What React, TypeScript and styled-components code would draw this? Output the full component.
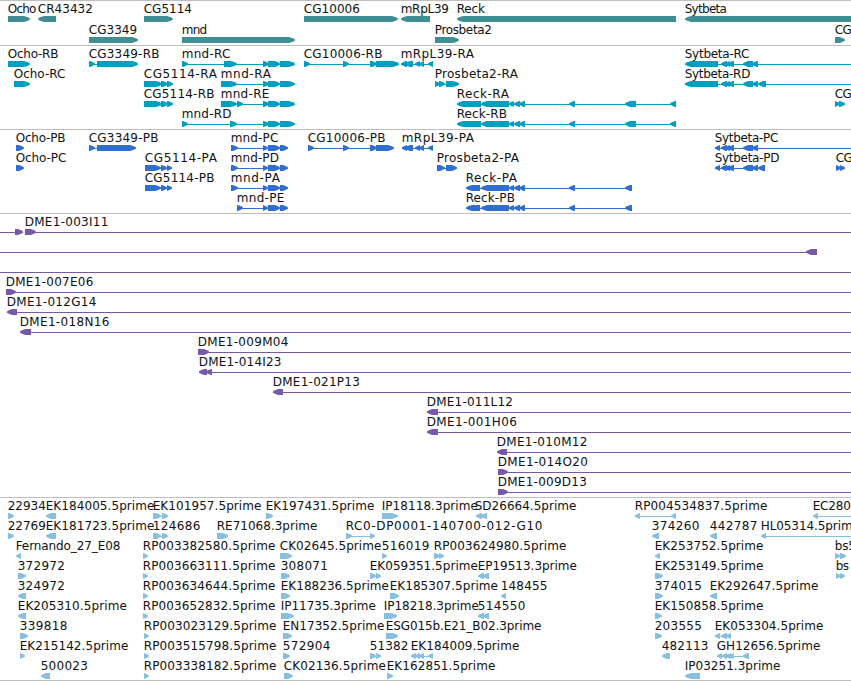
import React from "react";
import styled, { createGlobalStyle } from "styled-components";

const GlobalStyle = createGlobalStyle`
  html, body { margin: 0; padding: 0; background: #fff; overflow: hidden; }
`;

const VIEW_WIDTH = 851;

const Browser = styled.main`
  display: flex;
  flex-direction: column;
  width: 851px;
  height: 681px;
  overflow: hidden;
  background: #fff;
`;

const TrackPanel = styled.section<{ $tint: string; $pad: number }>`
  flex: none;
  border-top: 1px solid #bebebe;
  padding-bottom: ${(p) => p.$pad}px;
  color: ${(p) => p.$tint};
`;

const EndRule = styled.div`
  flex: none;
  height: 1px;
  background: #bebebe;
`;

const LaneMap = styled.svg<{ $height: number }>`
  display: block;
  width: 851px;
  height: ${(p) => p.$height}px;
  overflow: visible;
  fill: currentColor;
`;

const Label = styled.text`
  fill: #111;
  font: 12px "DejaVu Sans", sans-serif;
`;

type Dir = "R" | "L";
/**
 * A feature on the genomic axis. `end` is where its label stops, `exons` are
 * [start, end] pairs and `line` is the extent of the connecting intron.
 */
interface Feature {
  name: string;
  at: number;
  end: number;
  dir: Dir;
  exons: number[][];
  line?: number[];
}

const f = (name: string, end: number, dir: Dir, exons: number[][], line?: number[], at?: number): Feature => ({
  name,
  end,
  dir,
  exons,
  line,
  at: at ?? (exons.length ? exons[0][0] : 0),
});

function Exon({ x0, x1, dir }: { x0: number; x1: number; dir: Dir }) {
  const s = dir === "R" ? 1 : -1;
  const tip = dir === "R" ? x1 : x0;
  const base = dir === "R" ? x0 : x1;
  const head = Math.min(x1 - x0, x1 - x0 > 12 ? 6 : 5) * s;
  const points = [
    [base, 0],
    [tip - head, 0],
    [tip - 2 * s, 1.3],
    [tip, 2.5],
    [tip, 3.5],
    [tip - 2 * s, 4.7],
    [tip - head, 6],
    [base, 6],
  ];
  return <polygon points={points.map((p) => p.join(",")).join(" ")} />;
}

function Lane({ features, height }: { features: Feature[]; height: number }) {
  return (
    <LaneMap $height={height} viewBox={`0 0 ${VIEW_WIDTH} ${height}`}>
      {features.map((ft, i) => {
        const ends = ft.exons.flat();
        const [a, b] = ft.line ?? [Math.min(...ends), Math.max(...ends)];
        return (
          <g key={i} transform="translate(0 15)">
            {(ft.line || ft.exons.length > 1) && <rect x={a} y={3} width={b - a} height={1} />}
            {ft.exons.map(([x0, x1], j) => (
              <Exon key={j} x0={x0} x1={x1} dir={ft.dir} />
            ))}
          </g>
        );
      })}
      {features.map((ft, i) =>
        ft.name ? (
          <Label key={i} x={ft.at - 0.3} y={12} textLength={ft.end - ft.at + 0.2}>
            {ft.name}
          </Label>
        ) : null
      )}
    </LaneMap>
  );
}

const mndTail = [[263, 269], [268, 280], [280, 295]];
const mndCds = [[263, 268], [268, 280], [280, 288]];
const cg5114 = [[144, 162], [161, 168], [167, 173]];
const cg5114Cds = [[145, 161], [161, 167], [167, 172]];
const reckRna = [[457, 481], [481, 509], [509, 514], [514, 520], [519, 525], [569, 575], [625, 636], [670, 676]];
const reckCds = [[466, 480], [481, 509], [509, 514], [514, 520], [519, 525], [569, 575], [625, 632]];
const mrpl = [[401, 407], [405, 413], [415, 420], [419, 424], [428, 433]];
const sytRna = [[685, 718], [721, 727], [725, 730], [728, 734], [743, 753], [752, 758]];
const sytCds = [[715, 720], [721, 727], [725, 730], [728, 734], [743, 753], [752, 758]];

interface Track {
  tint: string;
  lane: number;
  pad: number;
  lanes: Feature[][];
}

const tracks: Track[] = [
  {
    tint: "#408e93",
    lane: 21,
    pad: 2,
    lanes: [
      [
        f("Ocho", 36.5, "R", [[8, 30]]),
        f("CR43432", 93, "L", [[38, 56]]),
        f("CG5114", 192, "R", [[144, 173]]),
        f("CG10006", 360, "R", [[304, 398]]),
        f("mRpL39", 449, "L", [[401, 430]]),
        f("Reck", 485, "L", [[457, 676]]),
        f("Sytbeta", 727, "L", [[685, 860]]),
      ],
      [
        f("CG3349", 137.3, "R", [[89, 138]]),
        f("mnd", 207.3, "R", [[182, 295]]),
        f("Prosbeta2", 492, "R", [[435, 459]]),
        f("CG", 852, "R", [[835, 845]]),
      ],
    ],
  },
  {
    tint: "#009fbf",
    lane: 20,
    pad: 3,
    lanes: [
      [
        f("Ocho-RB", 58.5, "R", [[8, 30]]),
        f("CG3349-RB", 159.5, "R", [[89, 95], [97, 138]]),
        f("mnd-RC", 230.5, "R", [[182, 188], [224, 237], ...mndTail]),
        f("CG10006-RB", 382.5, "R", [[304, 310], [343, 349], [370, 377], [376, 399]]),
        f("mRpL39-RA", 474, "L", mrpl),
        f("Sytbeta-RC", 749.5, "L", sytRna, [685, 851]),
      ],
      [
        f("Ocho-RC", 65.5, "R", [[14, 30]]),
        f("CG5114-RA", 217, "R", cg5114),
        f("mnd-RA", 271, "R", [[221, 237], ...mndTail]),
        f("Prosbeta2-RA", 518, "R", [[435, 440], [439, 445], [446, 459]]),
        f("Sytbeta-RD", 750.5, "L", [...sytRna, [758, 766]], [685, 851]),
      ],
      [
        f("CG5114-RB", 214.5, "R", cg5114),
        f("mnd-RE", 269.5, "R", [[221, 237], [237, 243], ...mndTail]),
        f("Reck-RA", 509, "L", reckRna),
        f("CG", 852, "R", [[835, 840], [839, 845]]),
      ],
      [
        f("mnd-RD", 231.5, "R", [[182, 188], [230, 237], ...mndTail]),
        f("Reck-RB", 507, "L", reckRna),
      ],
    ],
  },
  {
    tint: "#306fcf",
    lane: 20,
    pad: 3,
    lanes: [
      [
        f("Ocho-PB", 65.5, "R", [[16, 24]]),
        f("CG3349-PB", 158.5, "R", [[89, 95], [97, 136]]),
        f("mnd-PC", 278.5, "R", [[231, 238], ...mndCds]),
        f("CG10006-PB", 385.5, "R", [[308, 314], [343, 349], [370, 377], [376, 394]]),
        f("mRpL39-PA", 474, "L", [[402, 407], ...mrpl.slice(1)]),
        f("Sytbeta-PC", 778.5, "L", sytCds, [715, 851]),
      ],
      [
        f("Ocho-PC", 66.5, "R", [[16, 24]]),
        f("CG5114-PA", 217, "R", cg5114Cds),
        f("mnd-PD", 279, "R", [[231, 238], ...mndCds]),
        f("Prosbeta2-PA", 519, "R", [[437, 445], [446, 457]]),
        f("Sytbeta-PD", 779.5, "L", [...sytCds, [758, 765]]),
        f("CG", 853, "R", [[836, 841], [840, 845]]),
      ],
      [
        f("CG5114-PB", 214.5, "R", cg5114Cds),
        f("mnd-PA", 280, "R", [[231, 238], ...mndCds]),
        f("Reck-PA", 517, "L", reckCds),
      ],
      [
        f("mnd-PE", 284.5, "R", [[237, 243], ...mndCds]),
        f("Reck-PB", 515, "L", reckCds),
      ],
    ],
  },
  {
    tint: "#7859a8",
    lane: 20,
    pad: 3,
    lanes: [
      [
        f("", 0, "R", [[15, 23]], [0, 23]),
        f("DME1-003I11", 108.5, "R", [[25, 36]], [25, 851]),
      ],
      [f("", 0, "L", [[806, 817]], [0, 817])],
      [f("", 0, "L", [], [0, 851])],
      [f("DME1-007E06", 93.5, "R", [[6, 16]], [6, 851])],
      [f("DME1-012G14", 96.5, "L", [[7, 17]], [7, 851])],
      [f("DME1-018N16", 109.5, "L", [[20, 31]], [20, 851])],
      [f("DME1-009M04", 288.5, "R", [[198, 209]], [198, 851])],
      [f("DME1-014I23", 281.5, "L", [[199, 207], [206, 212]], [199, 851])],
      [f("DME1-021P13", 360, "L", [[273, 283]], [273, 851])],
      [f("DME1-011L12", 513, "L", [[427, 438]], [427, 851])],
      [f("DME1-001H06", 517, "L", [[427, 438]], [427, 851])],
      [f("DME1-010M12", 587.5, "L", [[497, 507]], [497, 851])],
      [f("DME1-014O20", 588, "R", [[498, 508]], [498, 851])],
      [f("DME1-009D13", 587, "R", [[498, 508]], [498, 851])],
    ],
  },
  {
    tint: "#88bfdf",
    lane: 20,
    pad: 2,
    lanes: [
      [
        f("22934", 46, "R", [[8, 14]]),
        f("EK184005.5prime", 154.5, "L", [[46, 56]]),
        f("EK101957.5prime", 261.5, "R", [[153, 161], [162, 168]]),
        f("EK197431.5prime", 374.5, "R", [[266, 273]]),
        f("IP18118.3prime", 478, "R", [[382, 398]]),
        f("SD26664.5prime", 576.5, "L", [[476, 482], [481, 487]], undefined, 475),
        f("RP004534837.5prime", 767.5, "L", [[635, 640], [671, 676]]),
        f("EC280", 851, "L", [[813, 818]], [813, 851]),
      ],
      [
        f("22769", 46, "R", [[8, 14]]),
        f("EK181723.5prime", 154.5, "L", [[46, 56]]),
        f("124686", 200.5, "R", [[153, 161], [162, 168]]),
        f("RE71068.3prime", 317.5, "R", [[217, 228]]),
        f("RC0-DP0001-140700-012-G10", 542.5, "R", [[346, 352], [370, 375]]),
        f("374260", 699.5, "L", [[652, 659]]),
        f("442787", 757.5, "L", [[710, 717]]),
        f("HL05314.5prime", 860, "L", [[761, 766]], [761, 851]),
      ],
      [
        f("Fernando_27_E08", 120.5, "L", [[16, 21]]),
        f("RP003382580.5prime", 275.5, "R", [[143, 148]]),
        f("CK02645.5prime", 381.5, "R", [[280, 292]]),
        f("516019", 429.5, "R", [[382, 387]]),
        f("RP003624980.5prime", 566.5, "R", [[434, 440], [439, 444]]),
        f("EK253752.5prime", 763.5, "L", [[655, 660]]),
        f("bs5", 856, "R", [[835, 840], [840, 846]]),
      ],
      [
        f("372972", 65, "R", [[18, 26]]),
        f("RP003663111.5prime", 275.5, "R", [[143, 148]]),
        f("308071", 328, "R", [[281, 290]]),
        f("EK059351.5prime", 478, "R", [[370, 376], [376, 381]]),
        f("EP19513.3prime", 577, "L", [[478, 484], [483, 489]]),
        f("EK253149.5prime", 763.5, "R", [[655, 663]]),
        f("bs", 849, "R", [[836, 841], [840, 845]]),
      ],
      [
        f("324972", 65, "L", [[18, 26]]),
        f("RP003634644.5prime", 275.5, "R", [[143, 148]]),
        f("EK188236.5prime", 389, "R", [[281, 290]]),
        f("EK185307.5prime", 498, "R", [[390, 399]]),
        f("148455", 547.5, "L", [[501, 506]]),
        f("374015", 702, "R", [[655, 663]]),
        f("EK292647.5prime", 818.5, "L", [[710, 717]]),
      ],
      [
        f("EK205310.5prime", 127, "L", [[18, 26]]),
        f("RP003652832.5prime", 275.5, "R", [[143, 148]]),
        f("IP11735.3prime", 376, "R", [[281, 294]]),
        f("IP18218.3prime", 479, "R", [[384, 397]]),
        f("514550", 525.5, "L", [[478, 484], [483, 489]]),
        f("EK150858.5prime", 763.5, "R", [[655, 662]]),
      ],
      [
        f("339818", 67.5, "R", [[20, 28]]),
        f("RP003023129.5prime", 276.5, "R", [[144, 149]]),
        f("EN17352.5prime", 384.5, "R", [[283, 292]]),
        f("ESG015b.E21_B02.3prime", 541.5, "R", [[386, 398]]),
        f("203555", 702, "R", [[655, 662]]),
        f("EK053304.5prime", 823.5, "L", [[715, 720], [721, 727], [726, 731]]),
      ],
      [
        f("EK215142.5prime", 128.5, "R", [[20, 25]]),
        f("RP003515798.5prime", 276.5, "R", [[144, 149]]),
        f("572904", 330.5, "R", [[283, 290]]),
        f("51382", 408.5, "R", [[370, 376], [376, 381]]),
        f("EK184009.5prime", 519.5, "L", [[411, 416], [415, 420], [419, 424], [428, 433]]),
        f("482113", 708.5, "L", [[662, 670]]),
        f("GH12656.5prime", 820.5, "L", [[717, 722], [722, 727], [726, 731], [729, 734], [743, 749]]),
      ],
      [
        f("500023", 88, "L", [[41, 50]]),
        f("RP003338182.5prime", 276.5, "R", [[144, 149]]),
        f("CK02136.5prime", 386, "R", [[284, 293]]),
        f("EK162851.5prime", 495.5, "R", [[387, 393]]),
        f("IP03251.3prime", 780.5, "L", [[685, 700]]),
      ],
    ],
  },
];

export default function App() {
  return (
    <>
      <GlobalStyle />
      <Browser>
        {tracks.map((t, i) => (
          <TrackPanel key={i} $tint={t.tint} $pad={t.pad}>
            {t.lanes.map((lane, j) => (
              <Lane key={j} features={lane} height={t.lane} />
            ))}
          </TrackPanel>
        ))}
        <EndRule />
      </Browser>
    </>
  );
}
